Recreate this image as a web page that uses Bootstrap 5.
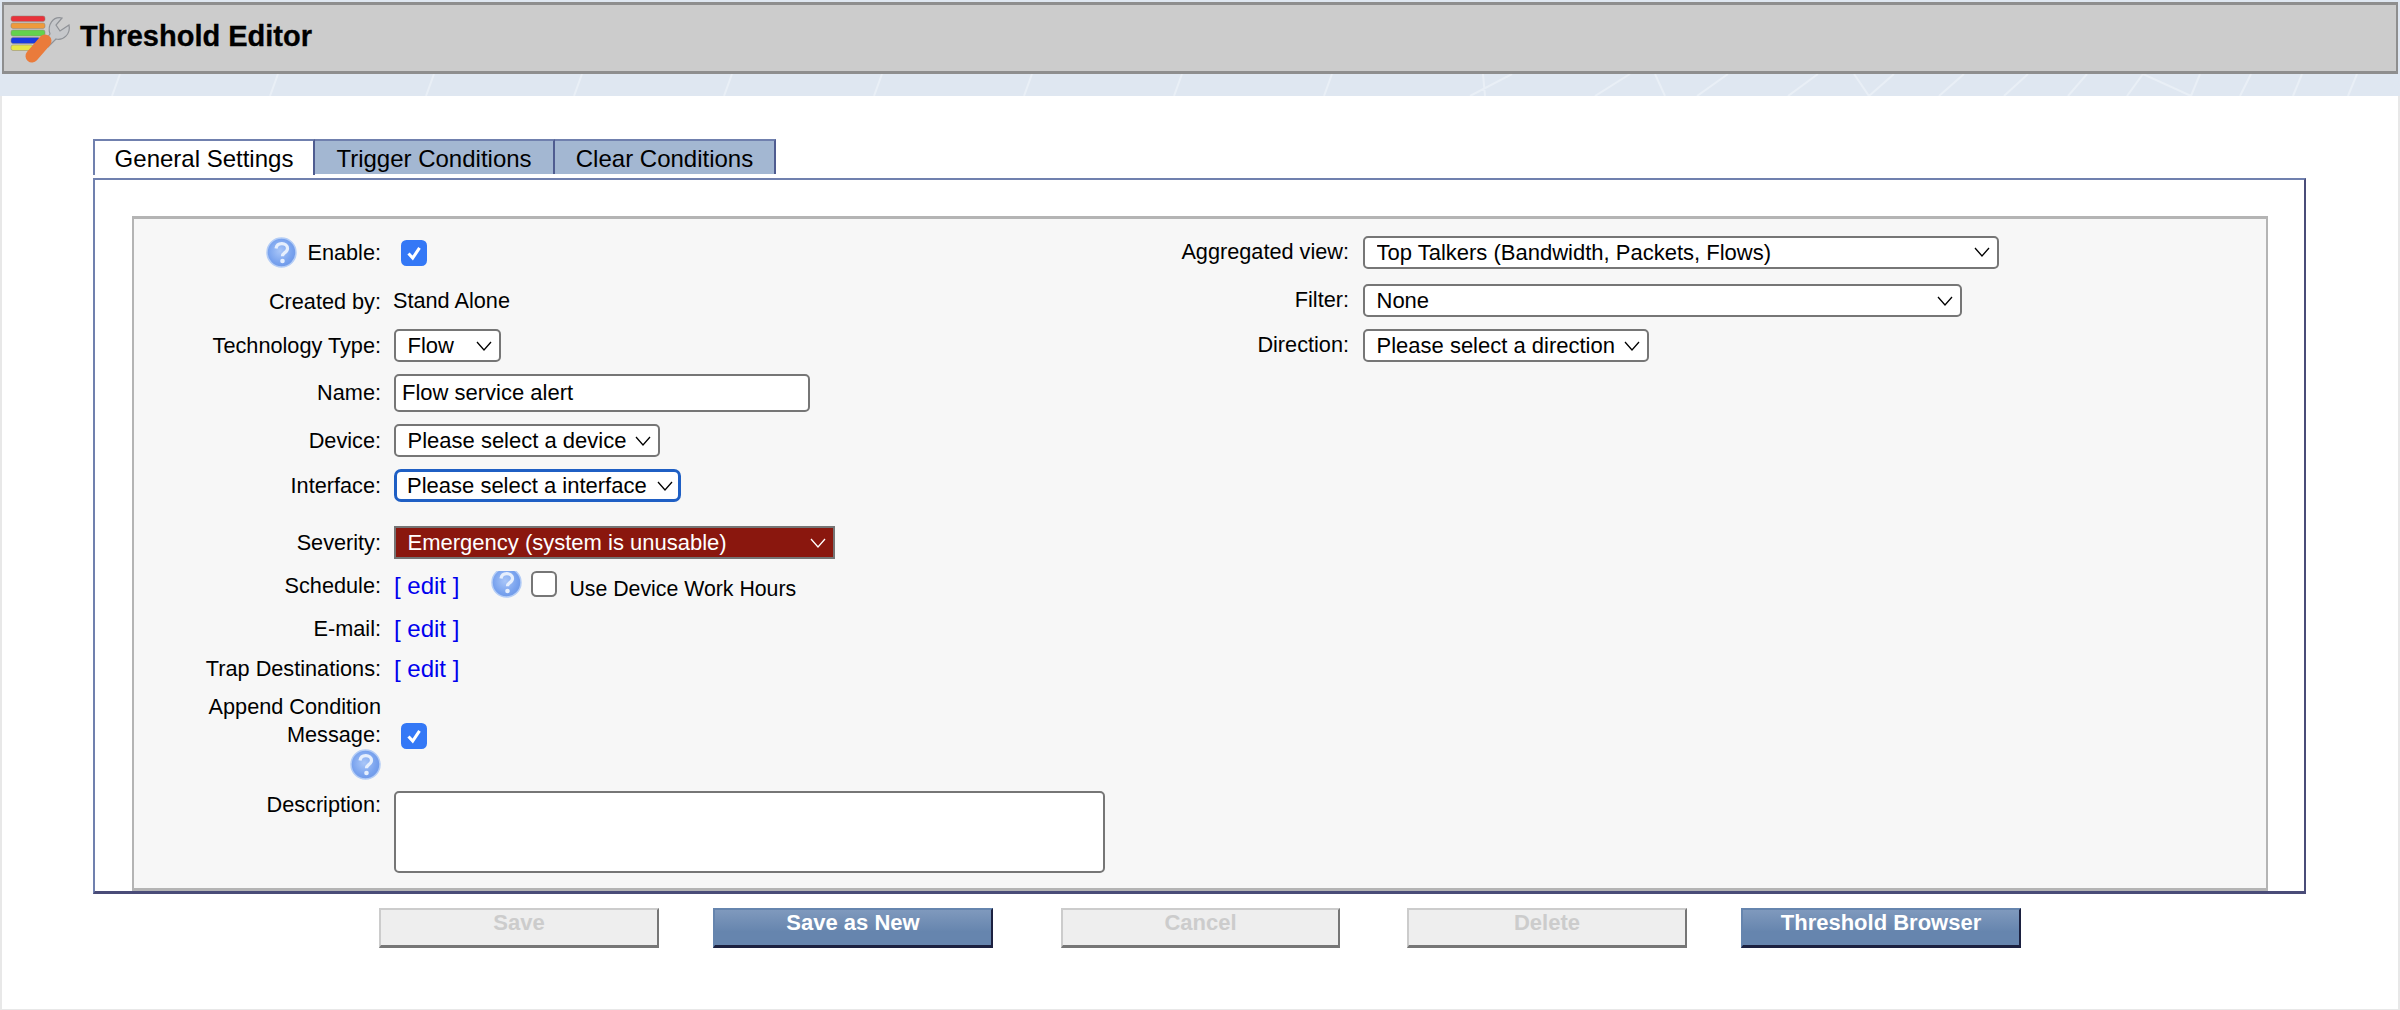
<!DOCTYPE html>
<html lang="en">
<head>
<meta charset="utf-8">
<title>Threshold Editor</title>
<link href="https://cdn.jsdelivr.net/npm/bootstrap@5.3.0/dist/css/bootstrap.min.css" rel="stylesheet">
<style>
html,body{height:1010px;overflow:hidden;font-family:"Liberation Sans",Arial,sans-serif;font-size:21.7px;color:#000}
body{background:#dfe7f1}
.title-bar{height:72px;margin:2px 2px 0;background:#ccc;border:3px solid #8e8e8e;border-left-width:2px;border-right-width:2px;gap:7px;padding-left:3px}
.title-text{font-size:29px;font-weight:700;-webkit-text-stroke:.3px #000;margin:0;line-height:1;padding-bottom:4px}
.sky-strip{height:22px;background:#dfe7f1}
.sky-lines{display:block;width:2400px;height:22px}
.page-wrap{height:914px;background:#fff;border:2px solid #e8e8e8;border-top:0;border-bottom-width:1px;padding:43px 92px 0 91px}
.tab-row{height:39px;align-items:flex-start}
.tab-btn{display:block;height:35px;padding:0;border:2px solid #7080ae;border-bottom:0;border-radius:0;font-size:24px;line-height:35px;text-align:center;color:#000;background:#a3b7d2}
.tab-btn:hover{color:#000}
.tab-on{background:#fff;height:36px;border-right-color:#4f5c90}
.t1{width:222px}.t2{width:240px;border-left:0;border-right-color:#4f5c90}.t3{width:221px;border-left:0;border-right-color:#4f5c90}
.tab-body{height:716px;border:2px solid #4a4c78;border-left-color:#7080ae;border-top-color:#7080ae;border-bottom-width:3px;padding:36px 36px 0 37px;background:#fff}
.inner-box{height:675px;background:#f7f7f7;border:2px solid #b4b4b4;border-top-width:3px;border-bottom-width:3px}
.left-col{width:957px;padding-top:8px}
.right-col{padding-top:9px}
.frow{display:flex;align-items:center}
.lab{width:247px;text-align:right;flex:none;line-height:28px}
.val{margin-left:12px;display:flex;align-items:center}
.rlab{width:258px;text-align:right;flex:none}
.rval{margin-left:14px}
.h1r{height:51px}.h2r{height:47px}.h3r{height:41px}.h4r{height:54px}.h5r{height:41px}.h6r{height:49px}
.h7r{height:44px;margin-top:10.5px}.h8r{height:43px}.h9r{height:43px}.h10r{height:37px}
.h-app{height:103.5px;align-items:flex-start;padding-top:5.5px}
.h-desc{align-items:flex-start;height:84px}
.h-r1{height:48px}.h-r2{height:49px}.h-r3{height:41px}
.sel{display:block;font-size:22px;line-height:25px;color:#000;height:33px;padding:0 24px 0 11.5px;margin-left:1px;border:2px solid #767676;border-radius:5px;background-color:#fff;background-image:url("data:image/svg+xml,%3Csvg xmlns='http://www.w3.org/2000/svg' viewBox='0 0 16 10'%3E%3Cpath d='M1 1l7 8 7-8' fill='none' stroke='%23000' stroke-width='1.300'/%3E%3C/svg%3E");background-position:right 7px center;background-size:16px 10px;box-shadow:none;font-family:inherit}
.rval .sel{margin-left:0}
.w-tech{width:107px}.w-dev{width:266px}
.w-if{width:287px;border:3.5px solid #1f5fc4;border-radius:7px;padding-left:10px;background-position:right 5.5px center}
.w-if:focus,.sel:focus{box-shadow:none}
.w-sev{width:441px;border-radius:0;background-color:#8a170e;border-color:#757575;color:#fff;background-image:url("data:image/svg+xml,%3Csvg xmlns='http://www.w3.org/2000/svg' viewBox='0 0 16 10'%3E%3Cpath d='M1 1l7 8 7-8' fill='none' stroke='%23fff' stroke-width='1.300'/%3E%3C/svg%3E")}
.w-agg{width:636px}.w-fil{width:599px}.w-dir{width:286px}
.name-in{width:416px;height:38px;font-size:22px;padding:0 6px;margin-left:1px;border:2px solid #767676;border-radius:5px;color:#000;line-height:32px;font-family:inherit;background:#fff}
.desc-in{width:711px;height:82px;margin-left:1px;border:2px solid #767676;border-radius:5px;padding:0;background:#fff;resize:none}
.chk{width:26px;height:26px;margin:0;border:2px solid #767676;border-radius:5px;flex:none;background-color:#fff}
.chk:checked{background-color:#3478f6;border-color:#3478f6;background-image:url("data:image/svg+xml,%3Csvg xmlns='http://www.w3.org/2000/svg' viewBox='0 0 26 26'%3E%3Cpath d='M6.500 13.500l5 5.500 8-12' fill='none' stroke='%23fff' stroke-width='3.600'/%3E%3C/svg%3E");background-size:100% 100%}
.chk-left{margin-left:8px}
.chk-msg{margin-top:30px}
.edit-link{color:#0000ee;text-decoration:none;font-size:24px;line-height:1;margin-left:1px}
.help-ic{display:block;flex:none;width:31px;height:31px}
.help-lab{gap:10px;display:flex;justify-content:flex-end;align-items:center}
.use-lab{margin-left:12px;font-size:21.3px;position:relative;top:4px}
.help-cut{height:27px;margin-left:32px;margin-right:9px;position:relative;top:-2px}
.chk-sched{position:relative;top:-2px}
.app-help{margin:0 0 0 auto}
.act-row{padding-left:286px;padding-top:14px}
.act-btn{height:40px;padding:0 0 9px;font-size:22px;line-height:1;font-weight:700;border-radius:0;border:solid;border-width:2px 2px 3px 2px;font-family:inherit}
.act-off,.act-off:disabled{background:#eee;color:#ccc;border-color:#ccc #767676 #767676 #ccc;opacity:1}
.act-on,.act-on:hover{background:linear-gradient(#7f99bd,#6685ae 62%);color:#fff;border-color:#6685ae #1c2140 #1c2140 #6685ae}
.b1{width:280px}.b2{width:280px;margin-left:54px}.b3{width:279px;margin-left:68px}.b4{width:280px;margin-left:67px}.b5{width:280px;margin-left:54px}
</style>
</head>
<body>
<svg width="0" height="0" class="d-block" aria-hidden="true">
  <defs>
    <radialGradient id="hg" cx=".45" cy=".45" r=".6">
      <stop offset="0" stop-color="#a9c6f8"/><stop offset=".7" stop-color="#78a2ee"/><stop offset="1" stop-color="#6e97e6"/>
    </radialGradient>
    <symbol id="help" viewBox="0 0 31 31">
      <circle cx="15.500" cy="15.500" r="14.500" fill="url(#hg)" stroke="#b4cdf6" stroke-width="1.500"/>
      <path d="M10 11.500c.5-3.200 3-4.800 5.800-4.800 3.200 0 5.700 1.900 5.700 4.700 0 2.300-1.500 3.400-3 4.500-1.200.9-2 1.700-2 3.300" fill="none" stroke="#e6effd" stroke-width="3.200"/>
      <circle cx="16.500" cy="24" r="2.300" fill="#e6effd"/>
    </symbol>
  </defs>
</svg>

<header class="title-bar d-flex align-items-center">
  <svg width="66" height="56" viewBox="0 0 66 56" aria-hidden="true">
    <g stroke="#8d8478" stroke-opacity=".5" stroke-width="1">
      <rect x="4" y="6" width="34" height="5.500" rx="2" fill="#e8323a"/>
      <rect x="4" y="13" width="34" height="5.500" rx="2" fill="#ee9a3c"/>
      <rect x="4" y="20" width="34" height="6" rx="2" fill="#63d24d"/>
      <rect x="4" y="27.500" width="29" height="6" rx="2" fill="#1a3ae0"/>
      <rect x="4" y="35" width="22" height="5.500" rx="2" fill="#e9e646"/>
    </g>
    <path d="M36 33 43 24C40 15 46 6 55 8L49 15 53 21 62 15C64 24 56 31 49 29L41 37Z" fill="#c6c8cb" stroke="#8f9297" stroke-width="1.200"/>
    <path d="M38 31 25 46" fill="none" stroke="#ea7b3b" stroke-width="13" stroke-linecap="round"/>
  </svg>
  <h1 class="title-text">Threshold Editor</h1>
</header>
<div class="sky-strip">
  <svg class="sky-lines" viewBox="0 0 2400 22" aria-hidden="true">
    <path fill="none" stroke="#e9eff6" stroke-width="2" d="M112 22l8-22M270 22l8-22M426 22l8-22M574 22l8-22M724 22l8-22M874 22l8-22M1024 22l8-22M1174 22l8-22M1324 22l8-22M1470 22l42-22M1483 0l2 22M1595 22l35-22M1655 0l10 22M1697 22l31-22M1788 22l30-22M1854 0l15 22 25-22M1939 22l25-22M2004 22l24-22M2068 22l19-22M2127 22l16-22 48 22 9-22M2240 22l11-22M2293 22l9-22M2348 22l9-22"/>
  </svg>
</div>

<main class="page-wrap">
  <ul class="nav tab-row">
    <li class="nav-item"><a class="nav-link tab-btn tab-on t1" href="#">General Settings</a></li>
    <li class="nav-item"><a class="nav-link tab-btn t2" href="#">Trigger Conditions</a></li>
    <li class="nav-item"><a class="nav-link tab-btn t3" href="#">Clear Conditions</a></li>
  </ul>
  <div class="tab-body">
    <div class="inner-box d-flex">
      <div class="left-col">
        <div class="frow h1r">
          <div class="lab help-lab"><svg class="help-ic"><use href="#help"/></svg><span>Enable:</span></div>
          <div class="val"><input class="form-check-input chk chk-left" type="checkbox" checked aria-label="Enable"></div>
        </div>
        <div class="frow h2r"><div class="lab">Created by:</div><div class="val">Stand Alone</div></div>
        <div class="frow h3r"><div class="lab">Technology Type:</div><div class="val"><select class="form-select sel w-tech" aria-label="Technology Type"><option>Flow</option></select></div></div>
        <div class="frow h4r"><div class="lab">Name:</div><div class="val"><input class="form-control name-in" type="text" value="Flow service alert" aria-label="Name"></div></div>
        <div class="frow h5r"><div class="lab">Device:</div><div class="val"><select class="form-select sel w-dev" aria-label="Device"><option>Please select a device</option></select></div></div>
        <div class="frow h6r"><div class="lab">Interface:</div><div class="val"><select class="form-select sel w-if" aria-label="Interface"><option>Please select a interface</option></select></div></div>
        <div class="frow h7r"><div class="lab">Severity:</div><div class="val"><select class="form-select sel w-sev" aria-label="Severity"><option>Emergency (system is unusable)</option></select></div></div>
        <div class="frow h8r">
          <div class="lab">Schedule:</div>
          <div class="val"><a class="edit-link" href="#">[ edit ]</a><svg class="help-ic help-cut" viewBox="0 4 31 27"><use href="#help" width="31" height="31"/></svg><input class="form-check-input chk chk-sched" type="checkbox" aria-label="Use Device Work Hours"><span class="use-lab">Use Device Work Hours</span></div>
        </div>
        <div class="frow h9r"><div class="lab">E-mail:</div><div class="val"><a class="edit-link" href="#">[ edit ]</a></div></div>
        <div class="frow h10r"><div class="lab">Trap Destinations:</div><div class="val"><a class="edit-link" href="#">[ edit ]</a></div></div>
        <div class="frow h-app">
          <div class="lab">Append Condition<br>Message:<svg class="help-ic app-help"><use href="#help"/></svg></div>
          <div class="val"><input class="form-check-input chk chk-left chk-msg" type="checkbox" checked aria-label="Append Condition Message"></div>
        </div>
        <div class="frow h-desc">
          <div class="lab">Description:</div>
          <div class="val"><textarea class="form-control desc-in" aria-label="Description"></textarea></div>
        </div>
      </div>
      <div class="right-col">
        <div class="frow h-r1"><div class="rlab">Aggregated view:</div><div class="rval"><select class="form-select sel w-agg" aria-label="Aggregated view"><option>Top Talkers (Bandwidth, Packets, Flows)</option></select></div></div>
        <div class="frow h-r2"><div class="rlab">Filter:</div><div class="rval"><select class="form-select sel w-fil" aria-label="Filter"><option>None</option></select></div></div>
        <div class="frow h-r3"><div class="rlab">Direction:</div><div class="rval"><select class="form-select sel w-dir" aria-label="Direction"><option>Please select a direction</option></select></div></div>
      </div>
    </div>
  </div>
  <div class="d-flex act-row">
    <button class="btn act-btn act-off b1" disabled>Save</button>
    <button class="btn act-btn act-on b2">Save as New</button>
    <button class="btn act-btn act-off b3" disabled>Cancel</button>
    <button class="btn act-btn act-off b4" disabled>Delete</button>
    <button class="btn act-btn act-on b5">Threshold Browser</button>
  </div>
</main>
<script src="https://cdn.jsdelivr.net/npm/bootstrap@5.3.0/dist/js/bootstrap.bundle.min.js"></script>
</body>
</html>
